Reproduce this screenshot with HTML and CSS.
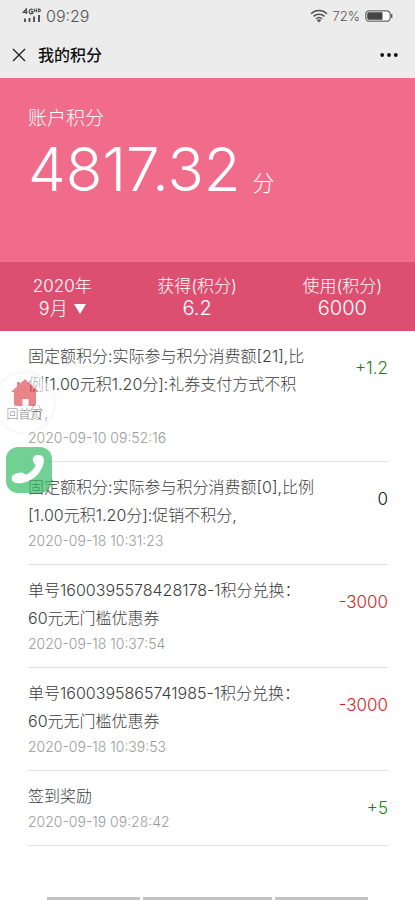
FILE: index.html
```html
<!DOCTYPE html>
<html lang="zh-CN">
<head>
<meta charset="utf-8">
<meta name="viewport" content="width=device-width, initial-scale=1">
<title>我的积分</title>
<link rel="stylesheet" href="styles.css">
</head>
<body>
<header class="top">
  <div class="status">
    <div class="status-group">
      <svg class="signal" viewBox="0 0 19 16" aria-hidden="true">
        <g fill="none" stroke="#555" stroke-width="1.400">
          <path d="M4.300 6V1L1.200 4.400h4.300M10.600 2C9.700 .9 7.200 .8 7.200 3.500S9.800 6.100 10.700 5.200V3.700H9"/>
          <path d="M12.300 .6v3.600M14.600 .6v3.600M12.300 2.500h2.300M16.500 1.100v2.600h.7c1.500 0 1.500-2.600 0-2.600z" stroke-width="1.100"/>
        </g>
        <path d="M2 10.500h2V14H2zM6.500 10h2v4h-2zM11 8.500h2V14h-2zM16 7h2v7h-2z" fill="#555"/>
      </svg>
      <span class="clock">09:29</span>
    </div>
    <div class="status-group">
      <svg class="wifi" viewBox="0 0 18 14" aria-hidden="true">
        <path d="M1 4.800a11.500 11.500 0 0 1 16 0M3.500 7.400a8 8 0 0 1 11 0M6 9.900a4.500 4.500 0 0 1 6 0" fill="none" stroke="#555" stroke-width="1.500"/>
        <path d="M6.800 11.200q2.200-1.800 4.400 0L9 13.400z" fill="#555"/>
      </svg>
      <span class="percent">72%</span>
      <svg class="battery" viewBox="0 0 28 12" aria-hidden="true">
        <rect x=".8" y=".8" width="24.400" height="10.400" rx="3.500" fill="#fff" stroke="#666" stroke-width="1.300"/>
        <path d="M4 2.200h13.500v7.600H4a1.800 1.800 0 0 1-1.800-1.800V4A1.800 1.800 0 0 1 4 2.200z" fill="#444"/>
        <path d="M26.700 4v4" stroke="#666" stroke-width="1.400"/>
      </svg>
    </div>
  </div>
  <nav class="nav">
    <button class="icon-button" type="button" aria-label="关闭">
      <svg class="close" viewBox="0 0 14 14"><path d="M1 1l12 12M13 1L1 13" stroke="#222" stroke-width="1.400"/></svg>
    </button>
    <h1 class="title">我的积分</h1>
    <button class="icon-button" type="button" aria-label="更多">
      <svg class="more" viewBox="0 0 18 4"><g fill="#111"><circle cx="2.200" cy="2" r="1.900"/><circle cx="9" cy="2" r="1.900"/><circle cx="15.800" cy="2" r="1.900"/></g></svg>
    </button>
  </nav>
</header>
<main class="main">
  <section class="balance">
    <h2 class="balance-label">账户积分</h2>
    <p class="balance-value">4817.32<span class="unit">分</span></p>
  </section>
  <section class="summary">
    <button class="summary-cell" type="button">
      <span class="summary-label">2020年</span>
      <span class="summary-month">9月<svg class="caret" viewBox="0 0 12 10" aria-hidden="true"><path d="M0 0h12L6 10z" fill="#fff"/></svg></span>
    </button>
    <div class="summary-cell"><span class="summary-label">获得(积分)</span><span class="summary-value">6.2</span></div>
    <div class="summary-cell"><span class="summary-label">使用(积分)</span><span class="summary-value">6000</span></div>
  </section>
  <ul class="records">
    <li class="record">
      <div><p class="desc">固定额积分:实际参与积分消费额[21],比<br>例[1.00元积1.20分]:礼券支付方式不积<br>分,</p><time class="date">2020-09-10 09:52:16</time></div>
      <span class="amount gain">+1.2</span>
    </li>
    <li class="record">
      <div><p class="desc">固定额积分:实际参与积分消费额[0],比例<br>[1.00元积1.20分]:促销不积分,</p><time class="date">2020-09-18 10:31:23</time></div>
      <span class="amount">0</span>
    </li>
    <li class="record">
      <div><p class="desc">单号1600395578428178-1积分兑换：<br>60元无门槛优惠券</p><time class="date">2020-09-18 10:37:54</time></div>
      <span class="amount spend">-3000</span>
    </li>
    <li class="record">
      <div><p class="desc">单号1600395865741985-1积分兑换：<br>60元无门槛优惠券</p><time class="date">2020-09-18 10:39:53</time></div>
      <span class="amount spend">-3000</span>
    </li>
    <li class="record">
      <div><p class="desc">签到奖励</p><time class="date">2020-09-19 09:28:42</time></div>
      <span class="amount gain">+5</span>
    </li>
  </ul>
</main>
<footer class="tabs"><span class="tab"></span><span class="tab tab-wide"></span><span class="tab"></span></footer>
<aside class="floating">
  <a class="home" href="#">
    <svg class="house" viewBox="0 0 28 28" aria-hidden="true"><path d="M14 0l14 13h-3v12a2 2 0 0 1-2 2h-5.500v-7h-6v7H5a2 2 0 0 1-2-2V13H0l6-5.500V3h3v1.700z" fill="#d9333d"/></svg>
    <span>回首页</span>
  </a>
  <a class="phone" href="#" aria-label="电话">
    <svg class="handset" viewBox="0 0 46 46" aria-hidden="true"><path d="M28 9.500c2.500-2 8-2 9.500 1.200 1.500 4-1 11.800-6.800 17.800C24.500 34.500 14 38 8.500 35.500 4.500 33.500 5 29 8 27.500c3-1.400 7-2.600 9.300-1.600 1.700.8 1.900 2 3.200 1.600 4-1.700 7.500-5.500 9-9 .3-1-.8-1.300-1.700-2.700-1.400-2-1.500-4.700.2-6.300z" fill="#fff"/></svg>
  </a>
</aside>
</body>
</html>
```
FILE: styles.css
```css
* { box-sizing: border-box; }

body {
  margin: 0;
  min-height: 100vh;
  display: flex;
  flex-direction: column;
  position: relative;
  background: #fff;
  color: #3c3c3c;
  font-family: Inter, "Noto Sans CJK SC", sans-serif;
  font-size: 16px;
  font-weight: 300;
}

h1, h2, p, ul { margin: 0; padding: 0; font-weight: inherit; }
button { border: 0; padding: 0; background: none; color: inherit; font: inherit; }
svg { display: block; }

.top { background: #ececec; }
.status { height: 32px; padding: 0 22px; display: flex; justify-content: space-between; align-items: center; color: #555; }
.status-group { display: flex; align-items: center; gap: 5px; }
.signal { width: 19px; height: 16px; }
.clock { font-size: 16px; }
.wifi { width: 18px; height: 14px; }
.percent { font-size: 13px; }
.battery { width: 28px; height: 12px; }
.nav { height: 46px; padding: 0 17px 0 12px; display: flex; align-items: center; }
.title { flex: 1; margin-left: 12px; font-size: 16px; font-weight: 500; line-height: 24px; color: #111; }
.close { width: 14px; height: 14px; }
.more { width: 18px; height: 4px; }

.balance { height: 184px; padding: 27px 28px; background: #f16b8a; color: #fff; }
.balance-label { font-size: 19px; line-height: 28px; }
.balance-value { font-size: 60px; line-height: 72px; }
.unit { margin-left: 12px; font-size: 22px; }

.summary { display: grid; grid-template-columns: 30% 35% 35%; padding: 13px 0 11px; background: #dc4f71; color: #fff; }
.summary-cell { display: flex; flex-direction: column; align-items: center; }
.summary-label { font-size: 17px; line-height: 22px; }
.summary-value { font-size: 20px; line-height: 23px; }
.summary-month { display: flex; align-items: center; gap: 6px; font-size: 18px; line-height: 23px; }
.caret { width: 12px; height: 10px; }

.records { padding: 0 27px 0 28px; list-style: none; }
.record { display: flex; justify-content: space-between; padding: 11px 0; border-bottom: 1px solid #e2e2e2; }
.desc { line-height: 28px; }
.date { display: block; font-size: 14px; line-height: 24px; color: #999; }
.amount { font-size: 17px; line-height: 52px; color: #111; }
.gain { color: #168016; }
.spend { color: #d91c22; }

.tabs { display: flex; gap: 3px; margin-top: auto; padding: 0 47px; }
.tab { flex: 93; height: 3px; background: #c2c2c2; }
.tab-wide { flex: 129; }

.floating { position: absolute; top: 373px; left: -5px; }
.home { width: 59px; height: 59px; display: flex; flex-direction: column; align-items: center; gap: 1px; padding-top: 6px; border-radius: 50%; background: #fff; box-shadow: 0 0 4px #ddd; opacity: 0.6; color: #333; font-size: 12px; line-height: 14px; text-decoration: none; }
.house { width: 28px; height: 28px; }
.phone { display: block; width: 46px; height: 46px; margin: 15px 0 0 11px; border-radius: 12px; background: #37bd67; opacity: 0.7; }
.handset { width: 46px; height: 46px; }
```
